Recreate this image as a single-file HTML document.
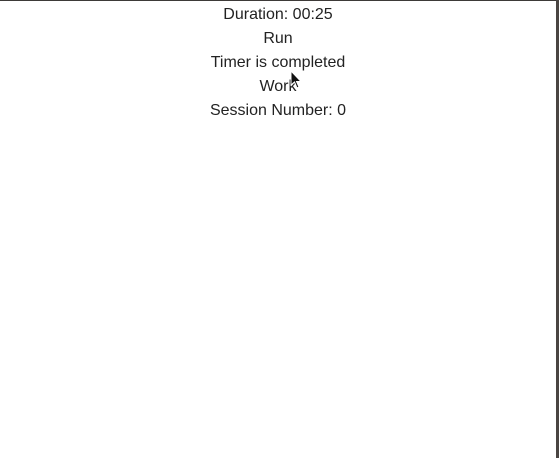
<!DOCTYPE html>
<html><head><style>
html,body{margin:0;padding:0;width:559px;height:458px;overflow:hidden;background:#fff}
.top{position:absolute;left:0;top:0;width:559px;height:1px;background:#3d3a38}
.right{position:absolute;right:0;top:0;width:3px;height:458px;background:#4a4542}
.c{position:absolute;left:0;width:556px;top:3px;text-align:center;font-family:"Liberation Sans",sans-serif;font-size:16px;color:#222;line-height:24px}
</style></head><body>
<div class="top"></div><div class="right"></div>
<div class="c">Duration: 00:25<br>Run<br>Timer is completed<br>Work<br>Session Number: 0</div>
<svg style="position:absolute;left:290px;top:70px" width="14" height="20"><path d="M1 1 L1 15 L4.5 12 L7 18 L9 17 L6.5 11.5 L11 11.5 Z" fill="#111" stroke="#fff" stroke-width="1"/></svg>
</body></html>
